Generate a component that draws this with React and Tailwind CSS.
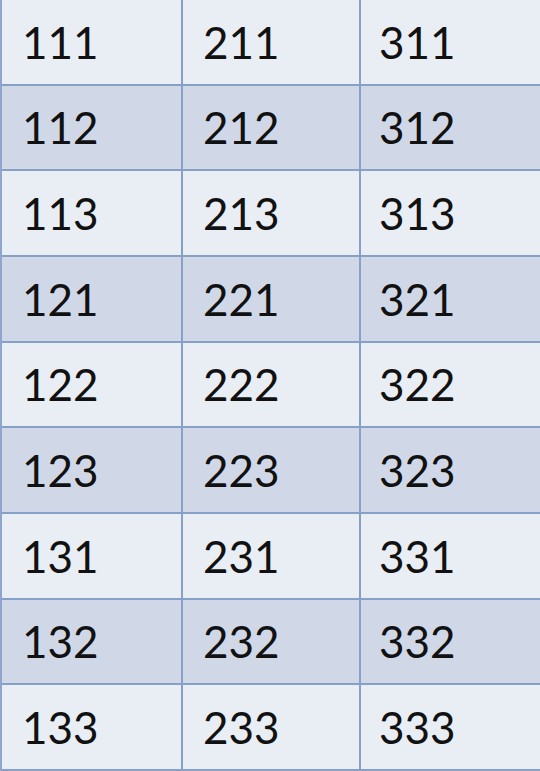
const rows = [
  ["111", "211", "311"],
  ["112", "212", "312"],
  ["113", "213", "313"],
  ["121", "221", "321"],
  ["122", "222", "322"],
  ["123", "223", "323"],
  ["131", "231", "331"],
  ["132", "232", "332"],
  ["133", "233", "333"],
];

export default function App() {
  return (
    <div className="h-[771px] w-[540px] overflow-hidden bg-[#e9edf4] font-['Lato',sans-serif] text-[#111]">
      <div className="grid h-full grid-cols-[181px_178px_181px] grid-rows-9 border-l-2 border-[#8ea6cc]">
        {rows.map((row, i) =>
          row.map((cell, j) => (
            <div
              key={cell}
              className={`flex items-center border-b-2 border-[#86a0c8] text-[44px] leading-none ${
                i % 2 ? "bg-[#d0d8e8]" : "bg-[#e9edf4]"
              } ${i === rows.length - 1 ? "border-b-0" : ""} ${
                j === 2 ? "border-r border-r-[#b4c3dc] pl-[18px]" : "border-r-2 pl-[20px]"
              }`}
            >
              {cell}
            </div>
          ))
        )}
      </div>
    </div>
  );
}
